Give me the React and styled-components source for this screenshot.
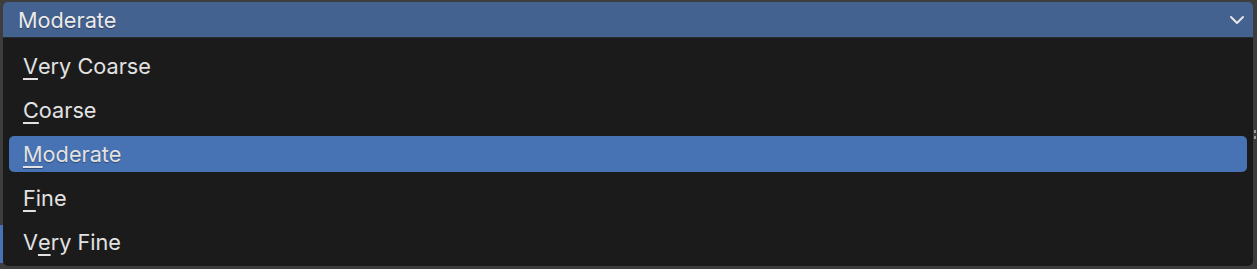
import React from "react";
import styled, {createGlobalStyle} from "styled-components";

const Global = createGlobalStyle`
	html, body {
		margin: 0;
		padding: 0;
		background: #3d3d3d;
	}
	body {
		font-family: Inter, "Noto Sans", "DejaVu Sans", sans-serif;
		-webkit-font-smoothing: antialiased;
	}
`

const items = [
	{label: "Very Coarse", key: 0},
	{label: "Coarse", key: 0},
	{label: "Moderate", key: 0},
	{label: "Fine", key: 0},
	{label: "Very Fine", key: 1},
]

const Chevron = () =>
	<svg width="16" height="10" viewBox="0 0 16 10">
		<path d="M2 2 L8 8 L14 2" fill="none" stroke="#e6e6e6" strokeWidth="2" strokeLinecap="round" strokeLinejoin="round"/>
	</svg>

const Mnemonic = ({text, at}) =>
	<>
		{text.slice(0, at)}
		<Under>{text[at]}</Under>
		{text.slice(at + 1)}
	</>

const App = () => {
	const selected = 2
	return <Page>
		<Global/>
		<Field>
			<FieldLabel>{items[selected].label}</FieldLabel>
			<Chevron/>
		</Field>
		<Menu>
			{items.map((it, i) =>
				<Item key={it.label} active={i === selected}>
					<Mnemonic text={it.label} at={it.key}/>
				</Item>
			)}
		</Menu>
		<BehindTab/>
		<EdgeDots>
			<Dot/>
			<Dot/>
		</EdgeDots>
	</Page>
}

const Page = styled.div`
	position: relative;
	width: 1257px;
	height: 269px;
	padding: 2px 4px 0 3px;
	box-sizing: border-box;
	overflow: hidden;
`

const Field = styled.div`
	height: 35px;
	background: #446290;
	border-radius: 5px 5px 0 0;
	display: flex;
	align-items: center;
	justify-content: space-between;
	padding: 0 8px 0 15px;
	color: #ebebeb;
	font-size: 21.7px;
	box-sizing: border-box;
`

const FieldLabel = styled.span`
	text-shadow: 0 1px 1px rgba(0,0,0,0.35);
`

const Menu = styled.div`
	position: relative;
	z-index: 1;
	background: #1b1b1b;
	border-top: 1px solid #2b2b2b;
	border-radius: 0 0 5px 5px;
	padding: 10px 6px 6px;
	display: flex;
	flex-direction: column;
	gap: 8px;
`

const Item = styled.div`
	height: 36px;
	display: flex;
	align-items: center;
	padding-left: 14px;
	border-radius: 5px;
	font-size: 21.7px;
	color: #e2e2e2;
	background: ${p => p.active ? "#4772b3" : "transparent"};
	text-shadow: ${p => p.active ? "0 1px 1px rgba(0,0,0,0.35)" : "none"};
`

const Under = styled.span`
	text-decoration: underline;
	text-decoration-thickness: 2px;
	text-underline-offset: 4px;
`

const BehindTab = styled.div`
	position: absolute;
	left: 0;
	top: 225px;
	width: 4px;
	height: 38px;
	background: #4772b3;
`

const EdgeDots = styled.div`
	position: absolute;
	right: 1px;
	top: 130px;
	display: flex;
	flex-direction: column;
	gap: 3px;
	z-index: 2;
`

const Dot = styled.div`
	width: 2px;
	height: 3px;
	background: #9a9a9a;
`

export default App;
